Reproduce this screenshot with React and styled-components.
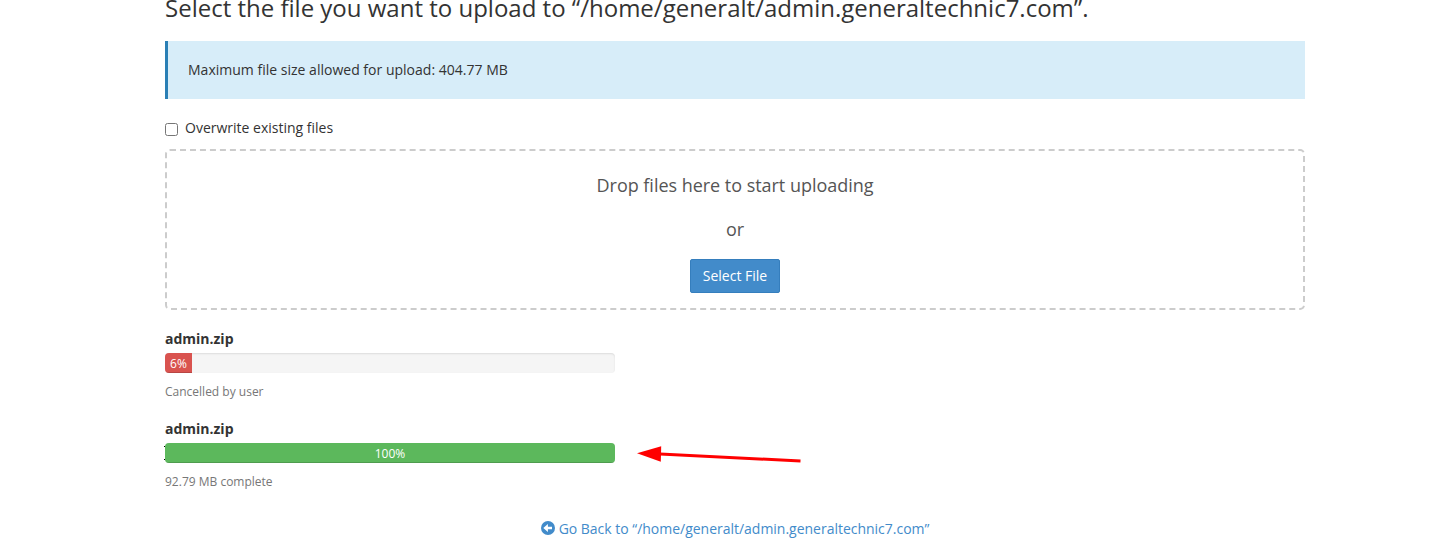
import React from "react";
import styled, { createGlobalStyle } from "styled-components";

const GlobalStyle = createGlobalStyle`
  *, *::before, *::after { box-sizing: border-box; }
  body {
    margin: 0;
    background: #fff;
    color: #333;
    font: 14px/20px "Open Sans", sans-serif;
    overflow: hidden;
  }
`;

const Page = styled.main`
  display: flow-root;
  position: relative;
  width: 1140px;
  height: 557px;
  margin-left: 165px;
`;

const Title = styled.h1`
  margin: -10px 0 16px;
  font-size: 24px;
  line-height: 35px;
  font-weight: 400;
  white-space: nowrap;
`;

const Callout = styled.div`
  height: 58px;
  padding: 19px 20px;
  border-left: 3px solid #2a7fb5;
  background: #d7edf9;
  letter-spacing: 0.01px;
`;

const CheckLabel = styled.label`
  display: flex;
  margin-top: 19px;
  height: 31px;
  gap: 7px;
`;

const Checkbox = styled.input`
  width: 13px;
  height: 13px;
  margin: 5px 0 0;
`;

const DropZone = styled.section`
  display: flex;
  flex-direction: column;
  align-items: center;
  height: 161px;
  padding-top: 21px;
  border: 2px dashed #ccc;
  border-radius: 5px;
  color: #555;
  font-size: 18px;
  line-height: 26px;
  letter-spacing: -0.03px;
`;

const DropText = styled.p`
  margin: 0 0 18px;
`;

const SelectButton = styled.button`
  width: 90px;
  height: 34px;
  margin-top: -1px;
  padding: 0;
  border: 1px solid #357ebd;
  border-radius: 2px;
  background: #428bca;
  color: #fff;
  font: 14px/20px "Open Sans", sans-serif;
`;

const Upload = styled.section`
  width: 450px;
  height: 90px;
`;

const Uploads = styled.div`
  padding-top: 19px;
`;

const FileName = styled.div`
  height: 24px;
  font-weight: 700;
`;

const ProgressRow = styled.div`
  position: relative;
`;

const FocusMark = styled.span`
  position: absolute;
  left: -1px;
  top: 3px;
  width: 1px;
  height: 14px;
  border: solid #000;
  border-width: 1px 0;
`;

const Track = styled.div`
  height: 20px;
  overflow: hidden;
  border-radius: 4px;
  background: #f5f5f5;
  box-shadow: inset 0 1px 2px rgba(0, 0, 0, 0.1);
`;

const Bar = styled.div`
  width: ${({ $percent }) => $percent}%;
  height: 100%;
  background: ${({ $color }) => $color};
  box-shadow: inset 0 -1px 0 rgba(0, 0, 0, 0.15);
  color: #fff;
  font-size: 12px;
  line-height: 21px;
  text-align: center;
`;

const Status = styled.div`
  margin-top: 9px;
  color: #777;
  font-size: 12px;
  line-height: 19px;
`;

const BackLink = styled.a`
  display: flex;
  justify-content: center;
  gap: 4px;
  margin-top: 10px;
  color: #428bca;
  letter-spacing: -0.015px;
  text-decoration: none;
`;

const BackIcon = styled.svg`
  width: 14px;
  height: 14px;
  margin-top: 2px;
`;

const Arrow = styled.svg`
  position: absolute;
  left: 470px;
  top: 440px;
  width: 170px;
  height: 28px;
`;

const uploads = [
  { percent: 6, color: "#d9534f", status: "Cancelled by user" },
  { percent: 100, color: "#5cb85c", status: "92.79 MB complete", focused: true },
];

export default function App() {
  return (
    <>
      <GlobalStyle />
      <Page>
        <Title>Select the file you want to upload to “/home/generalt/admin.generaltechnic7.com”.</Title>
        <Callout>Maximum file size allowed for upload: 404.77 MB</Callout>
        <CheckLabel><Checkbox type="checkbox" />Overwrite existing files</CheckLabel>
        <DropZone>
          <DropText>Drop files here to start uploading</DropText>
          <DropText>or</DropText>
          <SelectButton>Select File</SelectButton>
        </DropZone>
        <Uploads>
          {uploads.map((item) => (
            <Upload key={item.percent}>
              <FileName>admin.zip</FileName>
              <ProgressRow>
                {item.focused && <FocusMark />}
                <Track><Bar $percent={item.percent} $color={item.color}>{item.percent}%</Bar></Track>
              </ProgressRow>
              <Status>{item.status}</Status>
            </Upload>
          ))}
        </Uploads>
        <BackLink>
          <BackIcon viewBox="0 0 14 14">
            <circle cx="7" cy="7" r="7" fill="#428bca" />
            <path d="M2.3 7 6.9 3.1V5.7H11V8.3H6.9V10.9Z" fill="#fff" />
          </BackIcon>
          Go Back to “/home/generalt/admin.generaltechnic7.com”
        </BackLink>
        <Arrow viewBox="0 0 170 28">
          <path d="M25 14.1 165.5 21" stroke="#f00" strokeWidth="3" fill="none" />
          <path d="M2 13.2 26.2 6.3 25.8 21.8Z" fill="#f00" />
        </Arrow>
      </Page>
    </>
  );
}
